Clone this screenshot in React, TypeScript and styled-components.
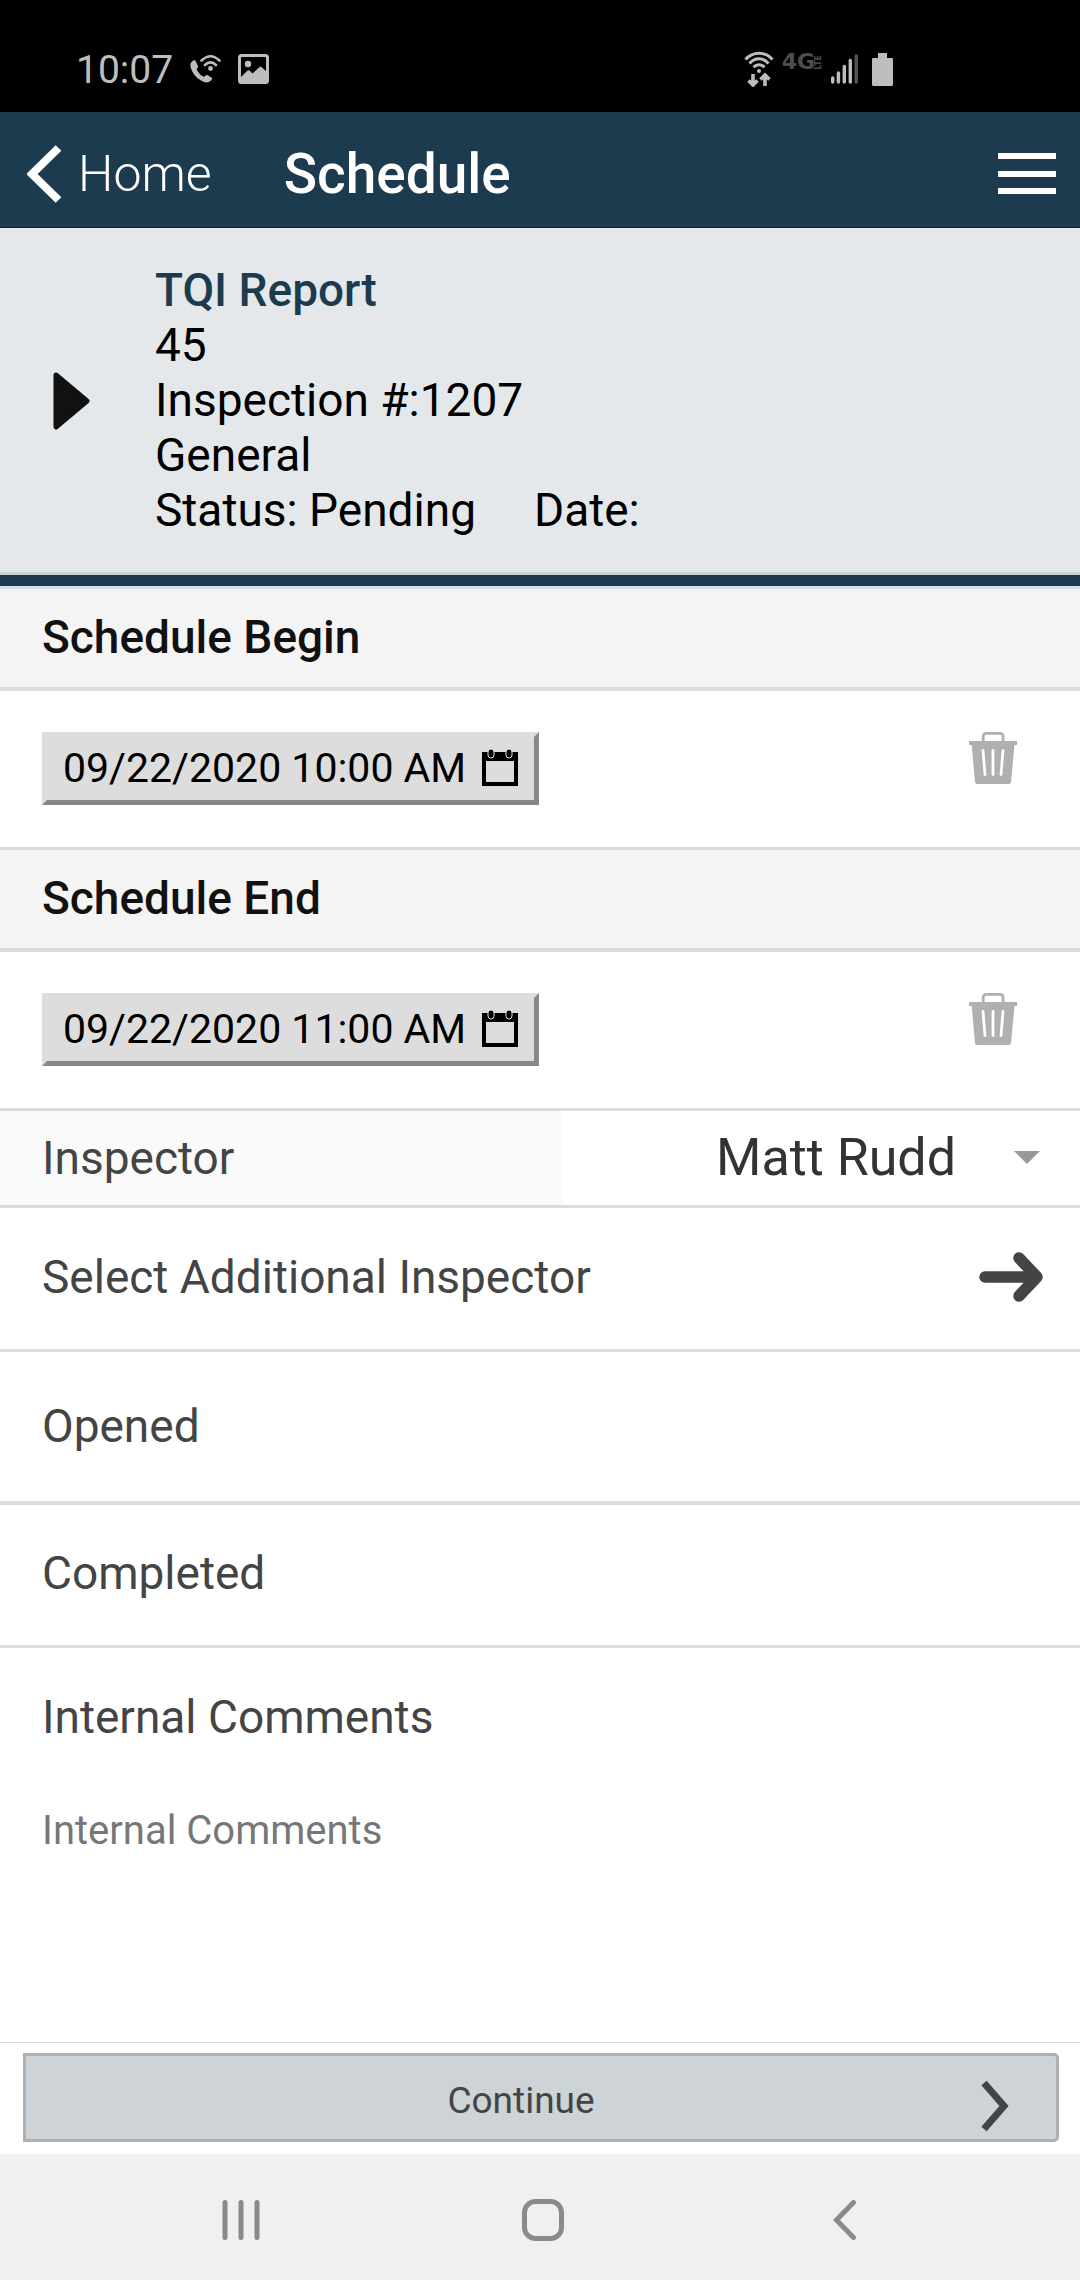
import React from "react";
import styled, { createGlobalStyle } from "styled-components";

const GlobalStyle = createGlobalStyle`
  *, *::before, *::after { box-sizing: border-box; }
  body {
    margin: 0;
    background: #fff;
    font-family: Roboto, "Noto Sans", sans-serif;
    color: #444;
  }
  button, select, textarea { font-family: inherit; margin: 0; }
  svg { display: block; flex: none; }
`;

const Screen = styled.div`
  display: flex;
  flex-direction: column;
  min-height: 100vh;
`;

const StatusBar = styled.div`
  display: flex;
  align-items: center;
  justify-content: space-between;
  height: 112px;
  padding: 26px 187px 0 76px;
  background: #000;
  color: #bdbdbd;
`;

const StatusGroup = styled.div<{ $gap: number }>`
  display: flex;
  align-items: center;
  gap: ${(p) => p.$gap}px;
`;

const Clock = styled.time`
  padding-top: 2px;
  font-size: 39px;
  line-height: 48px;
`;

const Network = styled.span`
  display: flex;
  align-items: center;
  height: 32px;
  padding-bottom: 14px;
  color: #4c4c4c;
  font: bold 22px/16px "DejaVu Sans", sans-serif;
`;

const NetworkSuffix = styled.small`
  writing-mode: vertical-rl;
  transform: rotate(180deg);
  font: bold 8px/8px "DejaVu Sans", sans-serif;
`;

const Header = styled.header`
  display: flex;
  align-items: center;
  height: 116px;
  padding: 8px 24px 0 27px;
  background: #1c3b4e;
  border-bottom: 1px solid #0b1d29;
  color: #fff;
`;

const BackLink = styled.a`
  display: flex;
  align-items: center;
  gap: 16px;
  color: inherit;
  text-decoration: none;
  font-size: 50px;
  font-weight: 300;
  line-height: 64px;
`;

const Title = styled.h1`
  flex: 1;
  margin: 0 0 0 72px;
  font-size: 55px;
  font-weight: 500;
  line-height: 64px;
`;

const IconButton = styled.button`
  display: flex;
  padding: 0;
  border: 0;
  background: none;
  color: inherit;
`;

const Report = styled.section`
  display: flex;
  align-items: center;
  gap: 65px;
  padding: 35px 53px 34px;
  background: #e4e8eb;
  color: #000;
  font-size: 46px;
  line-height: 55px;
`;

const ReportTitle = styled.h2`
  margin: 0;
  color: #1c3b4e;
  font-size: inherit;
  font-weight: 500;
`;

const ReportLine = styled.div`
  display: flex;
  gap: 58px;
`;

const Divider = styled.div`
  height: 17px;
  border: solid #c9d4da;
  border-width: 3px 0;
  border-bottom-color: #d6dfe8;
  background: #1c3b4e;
`;

const Main = styled.main`
  flex: 1;
  display: flex;
  flex-direction: column;
  font-size: 46px;
  line-height: 54px;
`;

const SectionTitle = styled.h3`
  margin: 0;
  padding: 21px 42px 23px;
  background: #f4f4f4;
  border-bottom: 4px solid #dcdcdc;
  color: #111;
  font-size: inherit;
  font-weight: 500;
`;

const DateRow = styled.div`
  display: flex;
  align-items: flex-start;
  justify-content: space-between;
  padding: 41px 63px 42px 42px;
  border-bottom: 3px solid #dcdcdc;
  color: #b0b0b0;
`;

const DateButton = styled.button`
  display: flex;
  align-items: center;
  gap: 16px;
  height: 73px;
  padding: 0 16px 2px;
  border: 5px solid;
  border-color: #ddd #888 #888 #ddd;
  background: #ddd;
  color: #000;
  font-size: 41px;
  line-height: 48px;
`;

const InspectorRow = styled.div`
  display: grid;
  grid-template-columns: 563px 1fr;
  height: 97px;
  border-bottom: 3px solid #dcdcdc;
`;

const InspectorLabel = styled.label`
  padding: 20px 42px;
  background: #fafafa;
`;

const SelectWrap = styled.div`
  display: flex;
  align-items: center;
  padding: 0 40px 2px 0;
  color: #999;
`;

const Select = styled.select`
  appearance: none;
  flex: 1;
  height: 92px;
  padding: 0 58px 0 0;
  border: 0;
  background: none;
  color: #333;
  font-size: 52px;
  text-align-last: right;
`;

const Row = styled.div<{ $top: number; $bottom: number; $line: number }>`
  padding: ${(p) => p.$top}px 42px ${(p) => p.$bottom}px;
  border-bottom: ${(p) => p.$line}px solid #dcdcdc;
`;

const RowButton = styled.button`
  display: flex;
  align-items: center;
  justify-content: space-between;
  padding: 42px 37px 45px 42px;
  border: 0;
  border-bottom: 3px solid #dcdcdc;
  background: none;
  color: inherit;
  font-size: inherit;
  line-height: inherit;
  text-align: left;
`;

const CommentsLabel = styled.label`
  padding: 42px 42px 0;
`;

const Comments = styled.textarea`
  flex: 1;
  min-height: 290px;
  padding: 63px 42px 0;
  border: 0;
  outline: 0;
  resize: none;
  background: none;
  color: #444;
  font-size: 40px;
  line-height: 48px;
  &::placeholder { color: #777; opacity: 1; }
`;

const Footer = styled.footer`
  padding: 10px 21px 12px 23px;
  border-top: 1px solid #dcdcdc;
`;

const ContinueButton = styled.button`
  display: flex;
  align-items: center;
  width: 100%;
  height: 89px;
  padding: 6px 47px 0 36px;
  border: 3px solid #adb1b3;
  border-radius: 0 5px 5px 0;
  background: #cdd3d6;
  color: #444;
  font-size: 37px;
  line-height: 44px;
`;

const ContinueText = styled.span`
  flex: 1;
  text-align: center;
`;

const ChevronSlot = styled.span`
  padding-top: 11px;
`;

const NavBar = styled.nav`
  display: grid;
  grid-template-columns: repeat(3, 1fr);
  align-items: center;
  justify-items: center;
  height: 126px;
  padding: 6px 84px 0 90px;
  background: #f0f0f0;
  color: #8a8a8a;
`;

const CalendarIcon = () => (
  <svg width="36" height="37" viewBox="0 0 36 37" aria-hidden="true">
    <path fill="currentColor" fillRule="evenodd" d="M0 3H36V37H0ZM4 12V33H32V12Z" />
    <g fill="currentColor" stroke="#ddd" strokeWidth="1">
      <rect x="6" y="0" width="6" height="9" rx="3" />
      <rect x="24" y="0" width="6" height="9" rx="3" />
    </g>
  </svg>
);

const TrashIcon = () => (
  <svg width="48" height="52" viewBox="0 0 48 52" aria-hidden="true">
    <path
      d="M14.200 10V4.500Q14.200 1.400 17.300 1.400H31Q34.100 1.400 34.100 4.500V10"
      fill="none"
      stroke="currentColor"
      strokeWidth="2.800"
    />
    <path
      fill="currentColor"
      d="M0 9H48V13H45.500L42 50Q41.800 52 39.800 52H8.200Q6.200 52 6 50L2.700 13H0Z"
    />
    <path
      d="M14 18.500L16 42.500M24 18.500V42.500M34 18.500L32 42.500"
      stroke="#fff"
      strokeWidth="2.800"
      strokeLinecap="round"
    />
  </svg>
);

type DateFieldProps = { title: string; value: string };

const DateField = ({ title, value }: DateFieldProps) => (
  <section>
    <SectionTitle>{title}</SectionTitle>
    <DateRow>
      <DateButton type="button">
        {value}
        <CalendarIcon />
      </DateButton>
      <IconButton type="button" aria-label={`Clear ${title}`}>
        <TrashIcon />
      </IconButton>
    </DateRow>
  </section>
);

const StatusIcons = () => (
  <StatusGroup $gap={8}>
    <svg width="30" height="36" viewBox="0 0 30 36" aria-hidden="true">
      <g fill="none" stroke="currentColor" strokeWidth="3">
        <path d="M1.500 8.500C9 .200 21 .200 28.500 8.500M5.500 12.500C11 6.200 19 6.200 24.500 12.500M9.500 16.200C12.500 12.800 17.500 12.800 20.500 16.200" />
        <path
          strokeWidth="3.600"
          d="M9 23V34M4.500 29.500L9 34L13.500 29.500M21 35V24M16.500 28.500L21 24L25.500 28.500"
        />
      </g>
      <circle cx="15" cy="20" r="2" fill="currentColor" />
    </svg>
    <Network>
      4G<NetworkSuffix>LTE</NetworkSuffix>
    </Network>
    <svg width="27" height="30" viewBox="0 0 27 30" aria-hidden="true">
      <g stroke="currentColor" strokeWidth="3.400" strokeLinecap="round">
        <path d="M1.700 24V28M7.400 19V28M13.300 12.500V28M19.300 6.500V28" />
        <path d="M25.200 2V28" stroke="#555" />
      </g>
    </svg>
    <svg width="27" height="33" viewBox="-6 0 27 33" aria-hidden="true">
      <path
        fill="currentColor"
        d="M6 0H15V5H20Q21 5 21 6V31.500Q21 33 19.500 33H1.500Q0 33 0 31.500V6Q0 5 1 5H6Z"
      />
    </svg>
  </StatusGroup>
);

export default function App() {
  return (
    <>
      <GlobalStyle />
      <Screen>
        <StatusBar>
          <StatusGroup $gap={17}>
            <Clock>10:07</Clock>
            <svg width="31" height="30" viewBox="0 0 31 30" aria-hidden="true">
              <path
                fill="currentColor"
                d="M5 6L8 12Q8.500 13.300 6.500 15Q8.500 20 14 23Q16 20.500 17.500 21L22 24Q22.500 25.500 20.500 27Q17 30 11 26.500Q3 22 .500 13Q-.500 7.500 5 6Z"
              />
              <g fill="none" stroke="currentColor" strokeWidth="2.600" strokeLinecap="round">
                <path d="M11.500 6.500Q20.500-2 29.500 6.500M15 11Q20.500 5.600 26 11" />
              </g>
              <circle cx="20.500" cy="14.500" r="2.400" fill="currentColor" />
            </svg>
            <svg width="32" height="30" viewBox="0 0 32 30" aria-hidden="true">
              <rect
                x="1.500"
                y="1.500"
                width="28"
                height="27"
                rx="2"
                fill="none"
                stroke="currentColor"
                strokeWidth="3"
              />
              <circle cx="10" cy="10" r="3.200" fill="currentColor" />
              <path fill="currentColor" d="M3 23L9 17Q10.500 15.500 12 17L14.500 19.500L21 13.500Q22.500 12 24 13.500L29 18V28H3Z" />
            </svg>
          </StatusGroup>
          <StatusIcons />
        </StatusBar>

        <Header>
          <BackLink href="#home">
            <svg width="35" height="58" viewBox="0 0 35 58" aria-hidden="true">
              <path d="M31.500 3L5 29L31.500 55" fill="none" stroke="currentColor" strokeWidth="8" />
            </svg>
            Home
          </BackLink>
          <Title>Schedule</Title>
          <IconButton type="button" aria-label="Menu">
            <svg width="58" height="42" viewBox="0 0 58 42" aria-hidden="true">
              <path d="M0 3H58M0 21H58M0 38H58" stroke="currentColor" strokeWidth="6" />
            </svg>
          </IconButton>
        </Header>

        <Report>
          <IconButton type="button" aria-label="Show report details">
            <svg width="37" height="58" viewBox="0 0 37 58" aria-hidden="true">
              <path
                d="M3 3L34 29L3 55Z"
                fill="#111"
                stroke="#111"
                strokeWidth="5"
                strokeLinejoin="round"
              />
            </svg>
          </IconButton>
          <div>
            <ReportTitle>TQI Report</ReportTitle>
            <ReportLine>45</ReportLine>
            <ReportLine>Inspection #:1207</ReportLine>
            <ReportLine>General</ReportLine>
            <ReportLine>
              <span>Status: Pending</span>
              <span>Date:</span>
            </ReportLine>
          </div>
        </Report>
        <Divider />

        <Main>
          <DateField title="Schedule Begin" value="09/22/2020 10:00 AM" />
          <DateField title="Schedule End" value="09/22/2020 11:00 AM" />
          <InspectorRow>
            <InspectorLabel htmlFor="inspector">Inspector</InspectorLabel>
            <SelectWrap>
              <Select id="inspector" defaultValue="Matt Rudd">
                <option>Matt Rudd</option>
              </Select>
              <svg width="26" height="13" viewBox="0 0 26 13" aria-hidden="true">
                <path d="M0 0H26L13 13Z" fill="currentColor" />
              </svg>
            </SelectWrap>
          </InspectorRow>
          <RowButton type="button">
            Select Additional Inspector
            <svg width="64" height="50" viewBox="0 0 64 50" aria-hidden="true">
              <path
                d="M6 25H56M40 6L58 25L40 44"
                fill="none"
                stroke="currentColor"
                strokeWidth="11.500"
                strokeLinecap="round"
                strokeLinejoin="round"
              />
            </svg>
          </RowButton>
          <Row $top={47} $bottom={48} $line={4}>Opened</Row>
          <Row $top={41} $bottom={45} $line={3}>Completed</Row>
          <CommentsLabel htmlFor="comments">Internal Comments</CommentsLabel>
          <Comments id="comments" placeholder="Internal Comments" />
        </Main>

        <Footer>
          <ContinueButton type="button">
            <ContinueText>Continue</ContinueText>
            <ChevronSlot>
              <svg width="29" height="52" viewBox="0 0 29 52" aria-hidden="true">
                <path
                  d="M4 3L24 26L4 49"
                  fill="none"
                  stroke="currentColor"
                  strokeWidth="7"
                />
              </svg>
            </ChevronSlot>
          </ContinueButton>
        </Footer>

        <NavBar aria-label="System">
          <IconButton type="button" aria-label="Recent apps">
            <svg width="38" height="42" viewBox="0 0 38 42" aria-hidden="true">
              <path
                d="M3 3.500V38.500M19 3.500V38.500M35 3.500V38.500"
                stroke="currentColor"
                strokeWidth="5"
                strokeLinecap="round"
              />
            </svg>
          </IconButton>
          <IconButton type="button" aria-label="Home screen">
            <svg width="42" height="42" viewBox="0 0 42 42" aria-hidden="true">
              <rect
                x="2.500"
                y="2.500"
                width="37"
                height="37"
                rx="11"
                fill="none"
                stroke="currentColor"
                strokeWidth="5"
              />
            </svg>
          </IconButton>
          <IconButton type="button" aria-label="Back">
            <svg width="24" height="42" viewBox="0 0 24 42" aria-hidden="true">
              <path
                d="M20.500 3.500L3.500 21L20.500 38.500"
                fill="none"
                stroke="currentColor"
                strokeWidth="5"
                strokeLinecap="round"
              />
            </svg>
          </IconButton>
        </NavBar>
      </Screen>
    </>
  );
}
